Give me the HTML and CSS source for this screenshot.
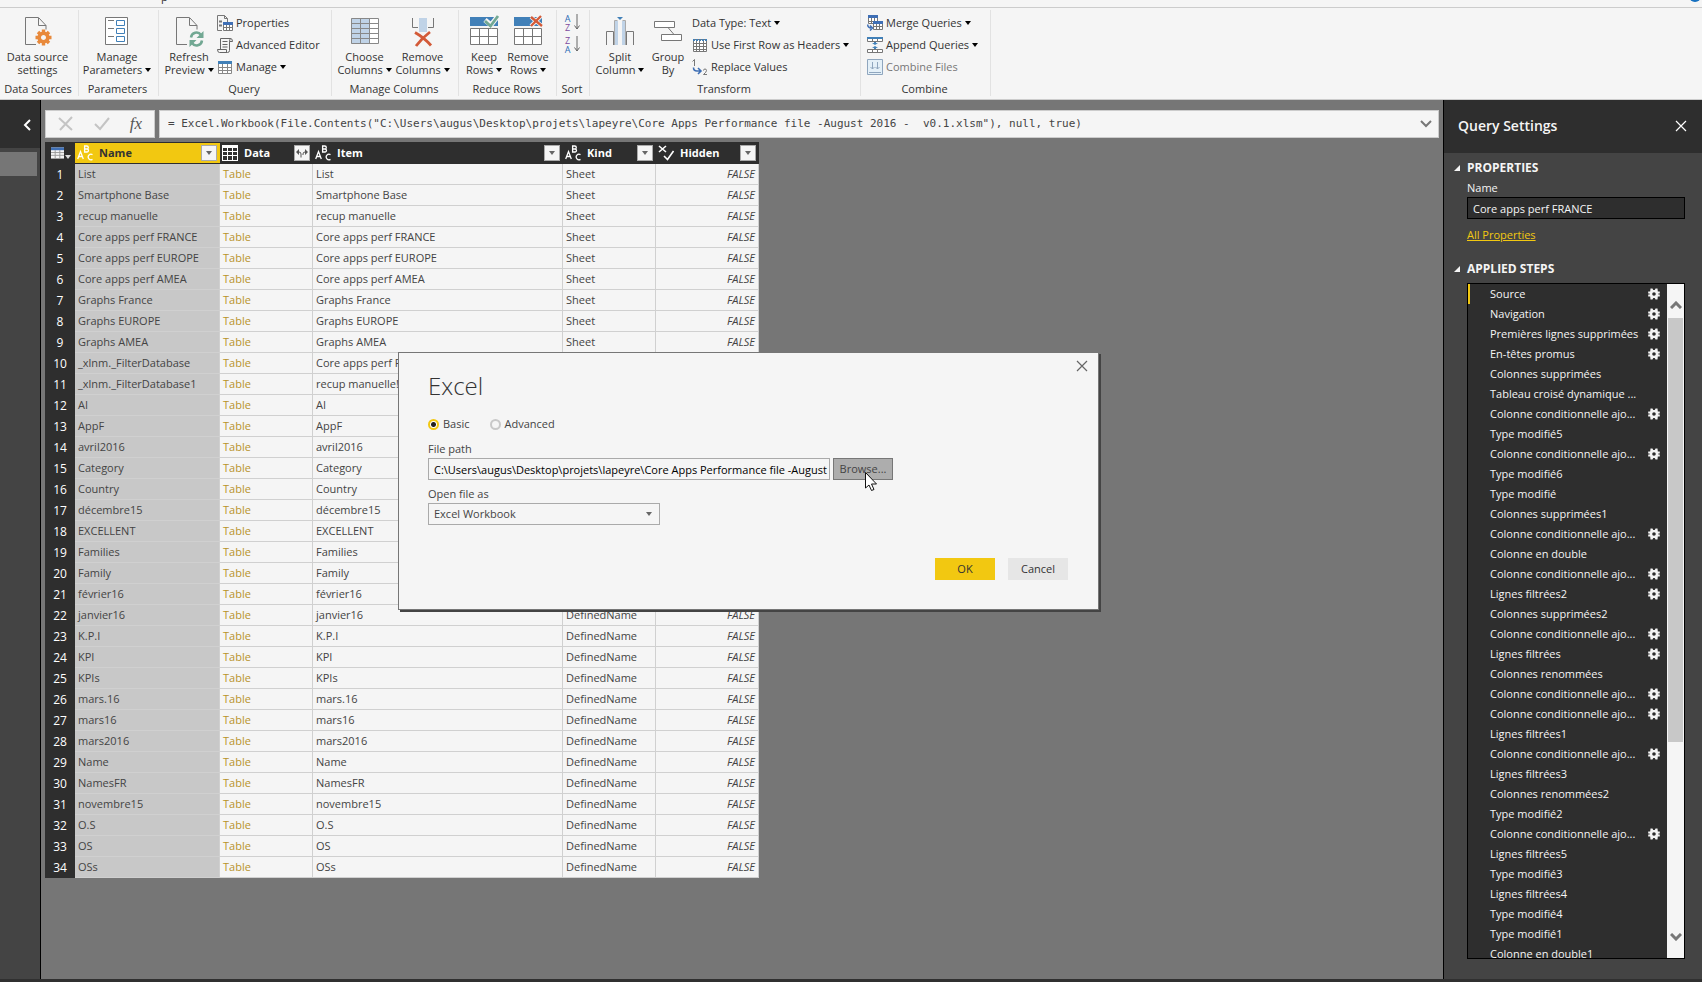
FILE: index.html
```html
<!DOCTYPE html>
<html lang="en">
  <head>
    <meta charset="utf-8" />
    <title>Query Editor</title>
    <link rel="stylesheet" href="styles.css" />
  </head>
  <body>
    <!-- shared icons -->
    <svg class="sprite" aria-hidden="true">
      <symbol id="gear" viewBox="0 0 12 12">
        <path fill="currentColor" fill-rule="evenodd" d="M2.500 0.500h2l.7 1.500h1.600l.7-1.500h2l.3 3h2v2h-1.500v1h1.500v2h-2l-.3 3h-2l-.7-1.500h-1.600l-.7 1.500h-2l-.3-3h-2v-2h1.500v-1h-1.500v-2h2zM6 4.200a1.800 1.800 0 1 0 0 3.600a1.800 1.800 0 1 0 0-3.600z" />
      </symbol>
      <symbol id="abc" viewBox="0 0 16 16">
        <g fill="none" stroke="currentColor" stroke-width="1.300">
          <path d="M.7 14 3.500 6.500 6.300 14M1.800 11.500h3.500" />
          <path d="M7.600 7V1h2.200a1.400 1.400 0 0 1 0 3H7.600h2.400a1.500 1.500 0 0 1 0 3z" />
          <path d="M15.500 9.600a2.800 2.800 0 1 0 0 4.800" />
        </g>
      </symbol>
      <symbol id="grid" viewBox="0 0 16 16">
        <path fill="currentColor" fill-rule="evenodd" d="M0 0h16v16H0zM1 4v3h4V4zM6 4v3h4V4zM11 4v3h4V4zM1 8v3h4V8zM6 8v3h4V8zM11 8v3h4V8zM1 12v3h4v-3zM6 12v3h4v-3zM11 12v3h4v-3z" />
      </symbol>
      <symbol id="page" viewBox="0 0 32 32">
        <path d="M24 14.500V10.500L16.500 2.500H3.500V29.500H14M16.500 3v7.500H24" fill="none" stroke="#777" />
      </symbol>
      <symbol id="rows" viewBox="0 0 32 32">
        <path fill="#4180b8" d="M2 2h28v9H2z" />
        <path fill="#fff" stroke="#777" d="M2.500 13.500h27v16h-27z" />
        <path stroke="#777" d="M2 21.500h28M11.500 13v17M20.500 13v17" />
      </symbol>
    </svg>

    <div class="titlebar"><span>p</span><i class="help-dot"></i></div>

    <div class="ribbon">
      <section class="group w-sources">
        <div class="tools">
          <button class="big">
            <svg viewBox="0 0 32 32"><use href="#page" /><g transform="translate(21.500 22.500)"><circle r="4.300" fill="none" stroke="#e8893b" stroke-width="3.600" /><path stroke="#e8893b" stroke-width="3.400" d="M0-8v3M0 5v3M-8 0h3M5 0h3M-5.500-5.500l2 2M3.500 3.500l2 2M-5.500 5.500l2-2M3.500-3.500l2-2" /></g></svg>
            <span>Data source<br />settings</span>
          </button>
        </div>
        <h2>Data Sources</h2>
      </section>

      <section class="group w-params">
        <div class="tools">
          <button class="big">
            <svg viewBox="0 0 32 32" fill="none"><path fill="#fff" stroke="#777" d="M4.500 2.500h22v27h-22z" /><path stroke="#777" d="M7 5.500h6M7 13.500h6M7 21.500h6" /><path stroke="#4180b8" d="M15.500 5.500h8v5h-8zM15.500 13.500h8v5h-8zM15.500 21.500h8v5h-8z" /></svg>
            <span>Manage<br />Parameters <i class="caret"></i></span>
          </button>
        </div>
        <h2>Parameters</h2>
      </section>

      <section class="group w-query">
        <div class="tools">
          <button class="big w-refresh">
            <svg viewBox="0 0 32 32"><use href="#page" /><g fill="none" stroke="#72a893" stroke-width="2.500"><path d="M18 22.500a5.500 5.500 0 0 1 10-2.500M29 25.500a5.500 5.500 0 0 1-10 2.500" /></g><path fill="#72a893" d="M30.500 16v7h-7zM16.500 32v-7h7z" /></svg>
            <span>Refresh<br />Preview <i class="caret"></i></span>
          </button>
          <div class="stack">
            <button class="small">
              <svg viewBox="0 0 16 16" fill="none"><path stroke="#777" d="M5 15.500H.5V.500h7l3 3V7M7.500.500v3h3" /><path stroke="#777" d="M2 6.500h3M2 10.500h3" stroke-width="2" /><path fill="#fff" stroke="#777" d="M6.500 8.500h9v7h-9zM6 12.500h10M9.500 9v7M12.500 9v7" /><path fill="#3f6fb5" d="M6 7h10v3H6z" /></svg>
              Properties
            </button>
            <button class="small">
              <svg viewBox="0 0 16 16" fill="none" stroke="#666"><path d="M3.500 12V1.500h10q2 0 2 3h-3v9q0 2-2 2h-8q-2 0-2-3h9v2.500M12.500 4.500q0-3 1.500-3M5.500 4.500h5M5.500 7.500h5M5.500 10h5" /></svg>
              Advanced Editor
            </button>
            <button class="small">
              <svg viewBox="0 0 16 16" class="bluegrid"><path fill="#fff" d="M1 2h14v12H1z" /><path fill="none" stroke="#888" d="M1.500 2.500h13v12h-13zM1 8.500h14M1 11.500h14M5.500 5v10M10.500 5v10" /><path fill="#4180b8" d="M1 2h14v3H1z" /></svg>
              Manage <i class="caret"></i>
            </button>
          </div>
        </div>
        <h2>Query</h2>
      </section>

      <section class="group w-cols">
        <div class="tools">
          <button class="big">
            <svg viewBox="0 0 32 32"><path fill="#fff" d="M2 3h28v26H2z" /><path fill="#c0d3e7" d="M2 3h19v26H2z" /><path fill="none" stroke="#888" d="M2.500 3.500h27v25h-27zM2 8.500h28M2 13.500h28M2 18.500h28M2 23.500h28M11.500 3v26M20.500 3v26" /></svg>
            <span>Choose<br />Columns <i class="caret"></i></span>
          </button>
          <button class="big">
            <svg viewBox="0 0 32 32" fill="none"><path fill="#c0d3e7" d="M12 3h8v14h-8z" /><path stroke="#777" d="M5.500 3v9.500H11M26.500 3v9.500H21" /><path stroke="#d35a38" stroke-width="2.800" d="M8 17.500q9 5 16 13M23 17q-8 6-14 14" /></svg>
            <span>Remove<br />Columns <i class="caret"></i></span>
          </button>
        </div>
        <h2>Manage Columns</h2>
      </section>

      <section class="group w-rows">
        <div class="tools">
          <button class="big w-row">
            <svg viewBox="0 0 32 32"><use href="#rows" /><path fill="none" stroke="#f5f5f5" stroke-width="5" d="M17 5l6 5 7-9" /><path fill="none" stroke="#72a893" stroke-width="2.800" d="M17 6l5.500 5L30 1" /></svg>
            <span>Keep<br />Rows <i class="caret"></i></span>
          </button>
          <button class="big w-row">
            <svg viewBox="0 0 32 32"><use href="#rows" /><path fill="none" stroke="#f5f5f5" stroke-width="4" d="M19 2l11 9M29 1L19 11" /><path fill="none" stroke="#d35a38" stroke-width="2.300" d="M19 2l11 9M29 1L19 11" /></svg>
            <span>Remove<br />Rows <i class="caret"></i></span>
          </button>
        </div>
        <h2>Reduce Rows</h2>
      </section>

      <section class="group w-sort">
        <div class="tools sort">
          <button aria-label="Sort ascending">
            <span class="az"><b>A</b><b class="z">Z</b></span>
            <svg viewBox="0 0 6 16" fill="none" stroke="#666"><path d="M3 0v15M.5 11.500 3 15l2.500-3.500" /></svg>
          </button>
          <button aria-label="Sort descending">
            <span class="az"><b class="z">Z</b><b>A</b></span>
            <svg viewBox="0 0 6 16" fill="none" stroke="#666"><path d="M3 0v15M.5 11.500 3 15l2.500-3.500" /></svg>
          </button>
        </div>
        <h2>Sort</h2>
      </section>

      <section class="group w-transform">
        <div class="tools">
          <button class="big w-split">
            <svg viewBox="0 0 32 32" fill="none"><path fill="#c0d3e7" d="M11 6h3v24h-3zM18 6h3v24h-3z" /><path stroke="#777" d="M2.500 30V16.500h7V30M29.500 30V16.500h-7V30" /><path stroke="#aaa" d="M10.500 30V5.500h3M21.500 30V5.500h-3" /><path fill="#4180b8" d="M13 2h6l-3 3z" /></svg>
            <span>Split<br />Column <i class="caret"></i></span>
          </button>
          <button class="big w-groupby">
            <svg viewBox="0 0 32 32" fill="none" stroke="#777"><path fill="#fff" d="M2.500 6.500h20v6h-20zM9.500 19.500h20v6h-20z" /><path d="M16 12.500l6 7" /></svg>
            <span>Group<br />By</span>
          </button>
          <div class="stack">
            <button class="small">Data Type: Text <i class="caret"></i></button>
            <button class="small">
              <svg viewBox="0 0 16 16" class="bluegrid"><path fill="#fff" stroke="#777" d="M1.500 2.500h13v12h-13zM1 6.500h14M1 9.500h14M1 12.500h14M4.500 4v11M7.500 4v11M11.500 4v11" /><path fill="#4180b8" d="M1 2h2v2H1zM4 2h2v2H4zM7 2h2v2H7zM10 2h2v2h-2zM13 2h2v2h-2z" /></svg>
              Use First Row as Headers <i class="caret"></i>
            </button>
            <button class="small">
              <svg viewBox="0 0 16 16" fill="none"><path stroke="#777" d="M.5 2.500 2.500.500V7M11.500 11.500q0-1.500 1.500-1.500t1.500 1.500q0 1.500-3 4H15" /><path stroke="#3f6fb5" stroke-width="1.600" d="M1.500 8.500q0 3.500 3.500 3.500h3.500M6 9l3 3-3 3" /></svg>
              Replace Values
            </button>
          </div>
        </div>
        <h2>Transform</h2>
      </section>

      <section class="group w-combine">
        <div class="tools">
          <div class="stack">
            <button class="small">
              <svg viewBox="0 0 16 16" fill="none"><path fill="#fff" stroke="#777" d="M1.500 1.500h9v7h-9zM1 6.500h10M4.500 3v6M7.500 3v6M6.500 7.500h9v7h-9zM6 11.500h10M9.500 9v6M12.500 9v6" /><path fill="#3f6fb5" d="M1 0h10v3H1zM6 6h10v3H6z" /><path stroke="#3f6fb5" stroke-width="1.500" d="M.7 9.500q0 3.500 3.500 3.500M3 10.500 5.500 13 3 15.500" /></svg>
              Merge Queries <i class="caret"></i>
            </button>
            <button class="small">
              <svg viewBox="0 0 16 16" fill="none"><path fill="#fff" stroke="#777" d="M.5.500h15v4H.500zM5.500 2v3M10.500 2v3M.5 12.500h15v3H.500zM5.500 12v4M10.500 12v4" /><path fill="#4180b8" d="M0 0h16v2H0zM7 5h2v1h2L8 8 5 6h2zM7 12h2v-1h2L8 9l-3 2h2z" /></svg>
              Append Queries <i class="caret"></i>
            </button>
            <button class="small" disabled>
              <svg viewBox="0 0 16 16" fill="none" stroke="#8fa6be"><path fill="#e4f0f8" d="M.5.500h15v15H.500z" /><path d="M5.500 3v7M3.500 8l2 2 2-2M10.500 3v7M8.500 8l2 2 2-2M2 13.500h12" /></svg>
              Combine Files
            </button>
          </div>
        </div>
        <h2>Combine</h2>
      </section>
    </div>

    <div class="workspace">
      <nav class="queries">
        <button class="expand" aria-label="Expand queries">
          <svg viewBox="0 0 8 12"><path d="M7 1 2 6l5 5" fill="none" stroke="#fff" stroke-width="2" /></svg>
        </button>
        <div class="query-selected"></div>
      </nav>

      <main class="editor">
        <div class="formula">
          <div class="formula-tools">
            <button aria-label="Discard"><svg viewBox="0 0 16 16"><path d="M1 2l13 12M14 1 2 14" stroke="#c4c4c4" stroke-width="2" /></svg></button>
            <button aria-label="Commit"><svg viewBox="0 0 16 16"><path d="M1 8l5 5 9-11" fill="none" stroke="#c4c4c4" stroke-width="2" /></svg></button>
            <button class="fx">fx</button>
          </div>
          <div class="formula-box">
            <input id="formula" aria-label="Formula" value='= Excel.Workbook(File.Contents("C:\Users\augus\Desktop\projets\lapeyre\Core Apps Performance file -August 2016 -  v0.1.xlsm"), null, true)' />
            <button aria-label="Expand formula bar"><svg viewBox="0 0 12 8"><path d="M1 1l5 5 5-5" fill="none" stroke="#777" stroke-width="2" /></svg></button>
          </div>
        </div>

        <table class="grid">
          <colgroup>
            <col class="c-num" /><col class="c-name" /><col class="c-data" /><col class="c-item" /><col class="c-kind" /><col class="c-hidden" />
          </colgroup>
          <thead>
            <tr>
              <th><div class="corner"><svg viewBox="0 0 14 12"><path fill="#f5f5f5" d="M0 0h14v12H0z" /><path stroke="#999" d="M0 5.500h14M0 8.500h14M4.500 3v9M9.500 3v9" /><path fill="#3f6fb5" d="M0 0h14v3H0z" /></svg><i class="caret"></i></div></th>
              <th class="selected"><div class="head"><svg viewBox="0 0 16 16"><use href="#abc" /></svg>Name<button aria-label="Filter Name"><i class="caret"></i></button></div></th>
              <th><div class="head"><svg viewBox="0 0 16 16"><path fill="#fff" fill-rule="evenodd" d="M0 0h16v16H0zM1 3v3h4V3zM6 3v3h4V3zM11 3v3h4V3zM1 7v3h4V7zM6 7v3h4V7zM11 7v3h4V7zM1 11v4h4v-4zM6 11v4h4v-4zM11 11v4h4v-4z" /></svg>Data<button aria-label="Expand Data"><svg viewBox="0 0 12 10"><path d="M5 9.500V6q0-2-2-2H2M7 7V6q0-2 2-2h1" fill="none" stroke="#555" /><path fill="#555" d="M3 1v6L0 4zM9 1v6l3-3z" /></svg></button></div></th>
              <th><div class="head"><svg viewBox="0 0 16 16"><use href="#abc" /></svg>Item<button aria-label="Filter Item"><i class="caret"></i></button></div></th>
              <th><div class="head"><svg viewBox="0 0 16 16"><use href="#abc" /></svg>Kind<button aria-label="Filter Kind"><i class="caret"></i></button></div></th>
              <th><div class="head"><svg viewBox="0 0 16 16"><path d="M1 1l7 6M8 1 1 7M6 11l3.500 3.500L15.500 6" fill="none" stroke="#fff" stroke-width="1.600" /></svg>Hidden<button aria-label="Filter Hidden"><i class="caret"></i></button></div></th>
            </tr>
          </thead>
          <tbody id="rows-body"></tbody>
        </table>
      </main>

      <aside class="settings">
        <header>
          <h1>Query Settings</h1>
          <button aria-label="Close"><svg viewBox="0 0 12 12"><path d="M1 1l10 10M11 1 1 11" stroke="#fff" stroke-width="1.200" /></svg></button>
        </header>
        <h3>PROPERTIES</h3>
        <div class="props">
          <label for="query-name">Name</label>
          <input id="query-name" value="Core apps perf FRANCE" />
          <a href="#">All Properties</a>
        </div>
        <h3>APPLIED STEPS</h3>
        <div class="steps">
          <ul id="steps"></ul>
          <div class="scrollbar">
            <svg viewBox="0 0 12 8"><path d="M1 7l5-5 5 5" fill="none" stroke="#777" stroke-width="3" /></svg>
            <div class="track"><div class="thumb"></div></div>
            <svg viewBox="0 0 12 8"><path d="M1 1l5 5 5-5" fill="none" stroke="#777" stroke-width="3" /></svg>
          </div>
        </div>
      </aside>

      <form class="dialog" role="dialog" aria-labelledby="dialog-title">
        <button type="button" class="dialog-close" aria-label="Close"><svg viewBox="0 0 12 12"><path d="M1 1l10 10M11 1 1 11" stroke="#666" stroke-width="1.200" /></svg></button>
        <h2 id="dialog-title">Excel</h2>
        <div class="modes">
          <label><input type="radio" name="mode" checked />Basic</label>
          <label><input type="radio" name="mode" />Advanced</label>
        </div>
        <label for="path">File path</label>
        <div class="path-row">
          <input id="path" value="C:\Users\augus\Desktop\projets\lapeyre\Core Apps Performance file -August 2016 -  v0.1.xlsm" />
          <button type="button" class="browse">Browse...</button>
          <svg class="cursor" viewBox="0 0 12 19"><path d="M.5.500v15.500l3.500-3 2.500 5.500 2.500-1-2.500-5.500h5z" fill="#fff" stroke="#111" /></svg>
        </div>
        <label for="open-as">Open file as</label>
        <div class="select">
          <select id="open-as"><option>Excel Workbook</option></select>
          <i class="caret"></i>
        </div>
        <div class="actions">
          <button type="button" class="ok">OK</button>
          <button type="button">Cancel</button>
        </div>
      </form>
    </div>

    <script>
      // name, item when it differs from the name
      const rows = [
        ["List"], ["Smartphone Base"], ["recup manuelle"], ["Core apps perf FRANCE"],
        ["Core apps perf EUROPE"], ["Core apps perf AMEA"], ["Graphs France"],
        ["Graphs EUROPE"], ["Graphs AMEA"],
        ["_xlnm._FilterDatabase", "Core apps perf FRANCE!_xlnm._FilterDatabase"],
        ["_xlnm._FilterDatabase1", "recup manuelle!_xlnm._FilterDatabase"],
        ["AI"], ["AppF"], ["avril2016"], ["Category"], ["Country"], ["décembre15"],
        ["EXCELLENT"], ["Families"], ["Family"], ["février16"], ["janvier16"],
        ["K.P.I"], ["KPI"], ["KPIs"], ["mars.16"], ["mars16"], ["mars2016"],
        ["Name"], ["NamesFR"], ["novembre15"], ["O.S"], ["OS"], ["OSs"]
      ];
      const sheets = 9;

      document.getElementById("rows-body").innerHTML = rows
        .map(
          ([name, item], i) => `<tr>
            <th>${i + 1}</th>
            <td class="selected">${name}</td>
            <td class="link">Table</td>
            <td>${item || name}</td>
            <td>${i < sheets ? "Sheet" : "DefinedName"}</td>
            <td class="bool">FALSE</td>
          </tr>`
        )
        .join("");

      // a leading * marks a step that has its own settings dialog
      const steps = [
        "*Source", "*Navigation", "*Premières lignes supprimées", "*En-têtes promus",
        "Colonnes supprimées", "Tableau croisé dynamique ...",
        "*Colonne conditionnelle ajo...", "Type modifié5",
        "*Colonne conditionnelle ajo...", "Type modifié6", "Type modifié",
        "Colonnes supprimées1", "*Colonne conditionnelle ajo...", "Colonne en double",
        "*Colonne conditionnelle ajo...", "*Lignes filtrées2", "Colonnes supprimées2",
        "*Colonne conditionnelle ajo...", "*Lignes filtrées", "Colonnes renommées",
        "*Colonne conditionnelle ajo...", "*Colonne conditionnelle ajo...",
        "Lignes filtrées1", "*Colonne conditionnelle ajo...", "Lignes filtrées3",
        "Colonnes renommées2", "Type modifié2", "*Colonne conditionnelle ajo...",
        "Lignes filtrées5", "Type modifié3", "Lignes filtrées4", "Type modifié4",
        "Type modifié1", "Colonne en double1"
      ];

      document.getElementById("steps").innerHTML = steps
        .map((step, i) => {
          const gear = step[0] === "*" ? '<svg><use href="#gear" /></svg>' : "";
          return `<li${i ? "" : ' class="current"'}><span>${step.replace("*", "")}</span>${gear}</li>`;
        })
        .join("");
    </script>
  </body>
</html>
```
FILE: styles.css
```css
* {
  box-sizing: border-box;
}

body {
  margin: 0;
  height: 100vh;
  display: flex;
  flex-direction: column;
  overflow: hidden;
  background: #444;
  color: #333;
  font: 11px/14px "Open Sans", "Noto Sans", sans-serif;
}

button,
input,
select {
  font: inherit;
  color: inherit;
  border: none;
  border-radius: 0;
  padding: 0;
  margin: 0;
  background: none;
}

h1,
h2,
h3,
ul {
  margin: 0;
  padding: 0;
  font-size: inherit;
  font-weight: normal;
}

svg {
  display: block;
  flex: none;
}

.sprite {
  position: absolute;
  width: 0;
  height: 0;
}

.caret {
  display: inline-block;
  border: 3px solid transparent;
  border-top: 4px solid #000;
  border-bottom: none;
  vertical-align: 2px;
}

/* ribbon */

.titlebar {
  height: 8px;
  flex: none;
  display: flex;
  align-items: flex-end;
  justify-content: space-between;
  overflow: hidden;
  padding: 0 1px 5px 161px;
  background: #f5f5f5;
  border-bottom: 1px solid #ccc;
}

.titlebar span {
  line-height: 11px;
}

.help-dot {
  width: 12px;
  height: 12px;
  border-radius: 50%;
  background: #1670c0;
}

.ribbon {
  flex: none;
  display: flex;
  height: 92px;
  padding: 2px 0 3px;
  background: #f5f5f5;
  border-bottom: 1px solid #ccc;
}

.group {
  display: flex;
  flex-direction: column;
  flex: none;
  border-right: 1px solid #e2e2e2;
}

.group h2 {
  padding-right: 2px;
  text-align: center;
  white-space: nowrap;
}

.tools {
  height: 74px;
  display: flex;
  justify-content: center;
  align-items: flex-start;
  padding-right: 3px;
}

.w-sources {
  width: 79px;
}
.w-params {
  width: 80px;
}
.w-query {
  width: 173px;
}
.w-cols {
  width: 127px;
}
.w-rows {
  width: 98px;
}
.w-sort {
  width: 33px;
}
.w-transform {
  width: 271px;
}
.w-combine {
  width: 130px;
}

.w-query .tools,
.w-transform .tools,
.w-combine .tools {
  justify-content: flex-start;
  padding-left: 2px;
}

.big {
  width: 58px;
  padding-top: 5px;
  display: flex;
  flex-direction: column;
  align-items: center;
  line-height: 13px;
  gap: 3px;
  white-space: nowrap;
}

.big svg {
  width: 32px;
  height: 32px;
  overflow: visible;
}

.w-refresh {
  width: 56px;
}
.w-row {
  width: 44px;
}
.w-split {
  width: 56px;
}
.w-groupby {
  width: 40px;
}

.stack {
  display: flex;
  flex-direction: column;
  padding: 2px 0 0 4px;
}

.w-query .stack {
  padding-left: 0;
}

.small {
  height: 22px;
  display: flex;
  align-items: center;
  gap: 3px;
  white-space: nowrap;
}

.small svg {
  width: 16px;
  height: 16px;
}

.small:disabled {
  color: #777;
}

.sort {
  flex-direction: column;
  justify-content: flex-start;
  align-items: center;
  gap: 4px;
  padding-top: 4px;
}

.sort button {
  display: flex;
  gap: 2px;
}

.sort svg {
  width: 6px;
  height: 16px;
}

.az b {
  display: block;
  width: 8px;
  font-size: 9px;
  line-height: 9px;
  font-weight: normal;
  color: #2a6cb5;
}

.az .z {
  color: #7d4a9e;
}

/* workspace */

.workspace {
  position: relative;
  flex: 1;
  min-height: 0;
  display: flex;
  border-bottom: 3px solid #303030;
}

.queries {
  width: 41px;
  flex: none;
  border-right: 1px solid #000;
  background: #444;
}

.expand {
  display: flex;
  justify-content: flex-end;
  align-items: center;
  width: 100%;
  height: 48px;
  padding: 2px 9px 0 0;
  background: #2e2e2e;
}

.expand svg {
  width: 8px;
  height: 12px;
}

.query-selected {
  height: 24px;
  margin: 4px 3px 0 0;
  background: #767676;
}

.editor {
  flex: 1;
  min-width: 0;
  padding: 10px 4px 0;
  background: #767676;
}

.formula {
  display: flex;
  gap: 4px;
  height: 28px;
  margin-bottom: 4px;
}

.formula-tools,
.formula-box {
  display: flex;
  align-items: center;
  background: #f5f5f5;
  border: 1px solid #ccc;
}

.formula-tools {
  width: 110px;
  justify-content: space-between;
  padding: 0 12px;
}

.formula-tools svg {
  width: 16px;
  height: 16px;
}

.fx {
  font: italic 17px/20px "Liberation Serif", serif;
  color: #555;
}

.formula-box {
  flex: 1;
  padding: 0 6px 0 8px;
}

.formula-box input {
  flex: 1;
  color: #444;
  font-family: "DejaVu Sans Mono", monospace;
}

.formula-box svg {
  width: 12px;
  height: 8px;
}

/* data grid */

.grid {
  table-layout: fixed;
  width: 714px;
  border-collapse: separate;
  border-spacing: 0;
  color: #444;
}

.c-num {
  width: 30px;
}
.c-name {
  width: 145px;
}
.c-data,
.c-kind {
  width: 93px;
}
.c-item {
  width: 250px;
}
.c-hidden {
  width: 103px;
}

.grid th {
  padding: 0;
  background: #2e2e2e;
  color: #fff;
}

.grid thead th {
  height: 22px;
  border: solid #2e2e2e;
  border-width: 1px 0;
}

.grid thead .selected {
  background: #f2c811;
  color: #333;
}

.grid tbody th {
  font-size: 12px;
  font-weight: normal;
}

.grid td {
  height: 21px;
  padding: 0 3px;
  background: #f5f5f5;
  border: solid #d0d0d0;
  border-width: 0 1px 1px 0;
  white-space: nowrap;
  overflow: hidden;
}

.grid td.selected {
  background: #c8c8c8;
}

.grid td.link {
  color: #b8932a;
}

.grid td.bool {
  text-align: right;
  font-style: italic;
}

.head {
  display: flex;
  align-items: center;
  gap: 6px;
  padding: 0 3px 0 2px;
}

.head svg {
  width: 16px;
  height: 16px;
}

.selected .head svg {
  color: #fff;
}

.head button {
  display: flex;
  align-items: center;
  justify-content: center;
  width: 16px;
  height: 16px;
  margin-left: auto;
  background: #f5f5f5;
  border: 1px solid #aaa;
}

.head button svg {
  width: 12px;
  height: 10px;
}

.head .caret {
  border-top-color: #666;
}

.corner {
  display: flex;
  align-items: center;
  padding-left: 6px;
}

.corner svg {
  width: 13px;
  height: 12px;
}

.corner .caret {
  margin: 7px 0 0 1px;
  border-top-color: #ddd;
}

/* settings pane */

.settings {
  width: 259px;
  flex: none;
  display: flex;
  flex-direction: column;
  padding-bottom: 20px;
  background: #444;
  border-left: 1px solid #000;
  color: #f5f5f5;
}

.settings header {
  height: 53px;
  display: flex;
  align-items: center;
  justify-content: space-between;
  padding: 0 15px 2px 14px;
  background: #2e2e2e;
}

.settings h1 {
  font-size: 14px;
  font-weight: 600;
}

.settings header svg {
  width: 12px;
  height: 12px;
}

.settings h3 {
  display: flex;
  align-items: center;
  gap: 7px;
  margin: 8px 0 0 10px;
  font-size: 12px;
  font-weight: bold;
}

.settings h3::before {
  content: "";
  border: solid transparent;
  border-width: 6px 0 0 6px;
  border-bottom: 6px solid #f5f5f5;
  border-top: none;
}

.props {
  display: flex;
  flex-direction: column;
  align-items: flex-start;
  margin: 6px 17px 12px 23px;
}

.props input {
  width: 100%;
  height: 22px;
  margin: 2px 0 9px;
  padding: 0 5px;
  background: #2e2e2e;
  border: 1px solid #000;
}

.props a {
  color: #f2c811;
}

.steps {
  flex: 1;
  min-height: 0;
  display: flex;
  margin: 7px 17px 0 23px;
  background: #2e2e2e;
  border: 1px solid #000;
  overflow: hidden;
}

.steps ul {
  flex: 1;
  list-style: none;
}

.steps li {
  height: 20px;
  display: flex;
  align-items: center;
  justify-content: space-between;
  padding: 0 7px 0 20px;
  border-left: 2px solid transparent;
  white-space: nowrap;
}

.steps li.current {
  border-color: #f2c811;
}

.steps li svg {
  width: 12px;
  height: 12px;
}

.scrollbar {
  width: 17px;
  display: flex;
  flex-direction: column;
  align-items: center;
  gap: 9px;
  padding: 17px 0;
  background: #f5f5f5;
}

.scrollbar svg {
  width: 12px;
  height: 8px;
}

.track {
  flex: 1;
  width: 15px;
}

.thumb {
  height: 70%;
  background: #c8c8c8;
}

/* dialog */

.dialog {
  position: absolute;
  left: 398px;
  top: 252px;
  width: 701px;
  height: 258px;
  padding: 17px 30px 17px 29px;
  background: #f5f5f5;
  border: 1px solid #767676;
  box-shadow: 2px 2px 0 #444;
  color: #444;
}

.dialog h2 {
  font-size: 24px;
  line-height: 32px;
  font-weight: 300;
  color: #333;
}

.dialog > label {
  display: block;
}

.dialog-close {
  position: absolute;
  right: 10px;
  top: 7px;
}

.dialog-close svg {
  width: 12px;
  height: 12px;
}

.modes {
  display: flex;
  gap: 20px;
  margin: 15px 0 11px;
}

.modes label {
  display: flex;
  align-items: center;
  gap: 4px;
}

.modes input {
  appearance: none;
  width: 11px;
  height: 11px;
  border: 2px solid #c8c8c8;
  border-radius: 50%;
}

.modes input:checked {
  border-color: #f2c811;
  background: radial-gradient(#222 2px, #fff 3px);
}

.path-row {
  position: relative;
  display: flex;
  gap: 3px;
  margin: 2px 0 7px;
}

.path-row input {
  width: 402px;
  height: 22px;
  padding: 0 0 0 5px;
  border: 1px solid #aaa;
  color: #000;
}

.dialog .browse {
  width: 60px;
  height: 22px;
  background: #adadad;
  border: 1px solid #777;
}

.cursor {
  position: absolute;
  left: 437px;
  top: 14px;
  width: 12px;
  height: 19px;
}

.select {
  position: relative;
  width: 232px;
  margin-top: 2px;
}

.select select {
  appearance: none;
  display: block;
  width: 100%;
  height: 22px;
  padding: 0 5px;
  border: 1px solid #aaa;
}

.select .caret {
  position: absolute;
  right: 8px;
  top: 9px;
  border-top-color: #666;
}

.actions {
  display: flex;
  justify-content: flex-end;
  gap: 13px;
  margin-top: 33px;
}

.actions button {
  width: 60px;
  height: 22px;
  background: #e6e6e6;
  color: #333;
}

.actions .ok {
  background: #f2c811;
}
```
